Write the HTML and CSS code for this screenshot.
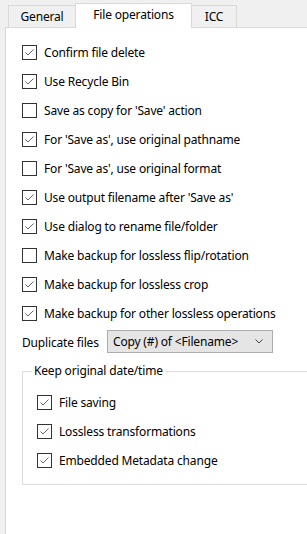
FILE: index.html
```html
<!DOCTYPE html>
<html>
<head>
<meta charset="utf-8">
<link rel="stylesheet" href="styles.css">
</head>
<body>
<div class="tabs">
  <div class="tab tab-general">General</div>
  <div class="tab tab-active">File operations</div>
  <div class="tab tab-icc">ICC</div>
</div>
<div class="panel">
  <div class="list">
    <label class="row"><span class="box on"><svg viewBox="0 0 13 13"><polyline points="2.5,6.5 5,9 10.5,3.5"/></svg></span><span class="txt">Confirm file delete</span></label>
    <label class="row"><span class="box on"><svg viewBox="0 0 13 13"><polyline points="2.5,6.5 5,9 10.5,3.5"/></svg></span><span class="txt">Use Recycle Bin</span></label>
    <label class="row"><span class="box"></span><span class="txt">Save as copy for 'Save' action</span></label>
    <label class="row"><span class="box on"><svg viewBox="0 0 13 13"><polyline points="2.5,6.5 5,9 10.5,3.5"/></svg></span><span class="txt">For 'Save as', use original pathname</span></label>
    <label class="row"><span class="box"></span><span class="txt">For 'Save as', use original format</span></label>
    <label class="row"><span class="box on"><svg viewBox="0 0 13 13"><polyline points="2.5,6.5 5,9 10.5,3.5"/></svg></span><span class="txt">Use output filename after 'Save as'</span></label>
    <label class="row"><span class="box on"><svg viewBox="0 0 13 13"><polyline points="2.5,6.5 5,9 10.5,3.5"/></svg></span><span class="txt">Use dialog to rename file/folder</span></label>
    <label class="row"><span class="box"></span><span class="txt">Make backup for lossless flip/rotation</span></label>
    <label class="row"><span class="box on"><svg viewBox="0 0 13 13"><polyline points="2.5,6.5 5,9 10.5,3.5"/></svg></span><span class="txt">Make backup for lossless crop</span></label>
    <label class="row"><span class="box on"><svg viewBox="0 0 13 13"><polyline points="2.5,6.5 5,9 10.5,3.5"/></svg></span><span class="txt">Make backup for other lossless operations</span></label>
  </div>
  <div class="dup">
    <span class="dup-label">Duplicate files</span>
    <div class="select">
      <span class="select-text">Copy (#) of &lt;Filename&gt;</span>
      <svg class="chev" viewBox="0 0 8 5"><polyline points="0.5,0.5 4,4 7.5,0.5"/></svg>
    </div>
  </div>
  <fieldset class="group">
    <legend>Keep original date/time</legend>
    <label class="row"><span class="box on"><svg viewBox="0 0 13 13"><polyline points="2.5,6.5 5,9 10.5,3.5"/></svg></span><span class="txt">File saving</span></label>
    <label class="row"><span class="box on"><svg viewBox="0 0 13 13"><polyline points="2.5,6.5 5,9 10.5,3.5"/></svg></span><span class="txt">Lossless transformations</span></label>
    <label class="row"><span class="box on"><svg viewBox="0 0 13 13"><polyline points="2.5,6.5 5,9 10.5,3.5"/></svg></span><span class="txt">Embedded Metadata change</span></label>
  </fieldset>
</div>
</body>
</html>
```
FILE: styles.css
```css
html, body {
  margin: 0;
  padding: 0;
  height: 100%;
  overflow: hidden;
}
body {
  background: #f0f0f0;
  font-family: "Noto Sans", "Open Sans", sans-serif;
  font-size: 12px;
  letter-spacing: -0.17px;
  color: #000;
}
.tabs {
  display: flex;
  align-items: flex-end;
  height: 27px;
  padding-left: 8px;
}
.tab {
  box-sizing: border-box;
  height: 22px;
  border: 1px solid #d9d9d9;
  border-bottom: none;
  background: #f0f0f0;
  display: flex;
  align-items: center;
  justify-content: center;
  line-height: 16px;
}
.tab-general { width: 67px; border-right: none; }
.tab-active {
  width: 117px;
  height: 25px;
  background: #fff;
  margin-bottom: -1px;
  position: relative;
  z-index: 1;
  padding-bottom: 3px;
}
.tab-icc { width: 45px; border-left: none; }
.panel {
  box-sizing: border-box;
  height: calc(100% - 27px);
  margin-left: 5px;
  border-left: 1px solid #d9d9d9;
  border-top: 1px solid #d9d9d9;
  background: #fff;
  padding-left: 16px;
}
.list {
  padding-top: 10px;
}
.row {
  display: flex;
  align-items: center;
  height: 29px;
}
.box {
  box-sizing: border-box;
  width: 15px;
  height: 15px;
  border: 1px solid #333;
  background: #fff;
  flex: none;
  display: flex;
}
.box svg {
  width: 13px;
  height: 13px;
  fill: none;
  stroke: #555;
  stroke-width: 0.9;
}
.txt {
  margin-left: 7px;
  line-height: 16px;
  white-space: nowrap;
}
.dup {
  display: flex;
  align-items: center;
  height: 23px;
  margin-top: 2px;
}
.dup-label {
  width: 85px;
  line-height: 16px;
  white-space: nowrap;
  padding-top: 3px;
}
.select {
  box-sizing: border-box;
  width: 166px;
  height: 23px;
  border: 1px solid #adadad;
  background: #e5e5e5;
  display: flex;
  align-items: center;
  padding-left: 5px;
  padding-right: 9px;
}
.select-text {
  flex: 1;
  white-space: nowrap;
  line-height: 16px;
}
.chev {
  width: 8px;
  height: 5px;
  fill: none;
  stroke: #444;
  stroke-width: 1;
}
.group {
  margin: 10px 0 0 0;
  padding: 9px 0 9px 14px;
  border: 1px solid #dcdcdc;
  border-right: none;
  min-width: 0;
}
.group legend {
  margin-left: -5px;
  padding: 0 2px;
  line-height: 16px;
}
```
